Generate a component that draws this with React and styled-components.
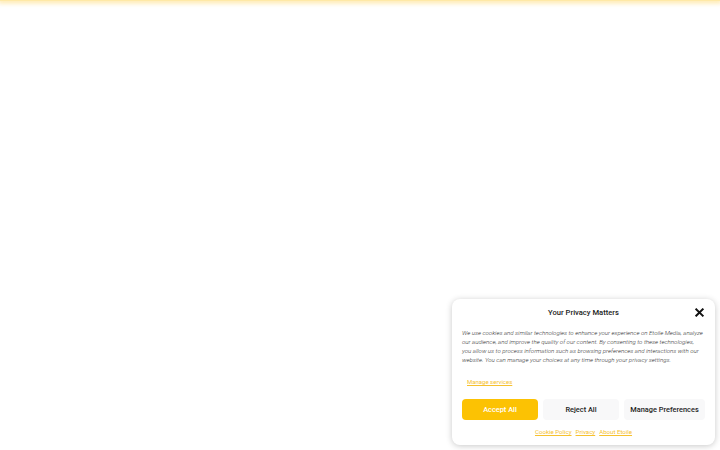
import React from 'react'
import styled, { createGlobalStyle } from 'styled-components'

const GlobalStyle = createGlobalStyle`
  html, body {
    margin: 0;
    padding: 0;
    background: #ffffff;
    font-family: Roboto, "Liberation Sans", sans-serif;
  }
`;

const Page = styled.div`
  width: 720px;
  height: 450px;
  position: relative;
  overflow: hidden;
  background: #fff;
`;

const TopGlow = styled.div`
  height: 1px;
  background: #ffe9a6;
  box-shadow: 0 0 5px 2px rgba(255, 210, 80, 0.55);
`;

const Banner = styled.div`
  position: absolute;
  left: 452px;
  top: 299px;
  width: 263px;
  box-sizing: border-box;
  padding: 8px 10px 10px;
  background: #fff;
  border-radius: 8px;
  box-shadow: 0 1px 6px rgba(0, 0, 0, 0.22);
  display: flex;
  flex-direction: column;
`;

const Header = styled.div`
  position: relative;
  display: flex;
  justify-content: center;
  align-items: center;
  height: 10px;

  h2 {
    margin: 0;
    font-size: 7.6px;
    font-weight: 500;
    color: #222;
  }
`;

const Close = styled.button`
  position: absolute;
  right: 1px;
  top: 0;
  width: 10px;
  height: 10px;
  padding: 0;
  border: 0;
  background: none;
  display: flex;
  align-items: center;
  justify-content: center;
`;

const Message = styled.p`
  margin: 11px 0 0;
  font-size: 6.1px;
  line-height: 9px;
  font-style: italic;
  font-weight: 300;
  color: #333;
  white-space: nowrap;
`;

const Services = styled.a`
  display: block;
  margin: 14px 0 0 5px;
  font-size: 6px;
  color: #f6c12e;
  text-decoration: underline;
`;

const Buttons = styled.div`
  display: grid;
  grid-template-columns: 76px 76px 1fr;
  gap: 5px;
  margin-top: 14px;
`;

const Button = styled.button`
  height: 21px;
  border: 0;
  border-radius: 4px;
  padding: 0;
  font-family: Roboto, "Liberation Sans", sans-serif;
  font-size: 7.4px;
  font-weight: 500;
  background: ${p => (p.$primary ? '#fcc203' : '#f8f8f9')};
  color: ${p => (p.$primary ? '#fff' : '#222')};
`;

const Links = styled.div`
  display: flex;
  justify-content: center;
  gap: 4px;
  margin-top: 8px;

  a {
    font-size: 6.1px;
    color: #f6c12e;
    text-decoration: underline;
  }
`;

const App = () => {
    return (
        <Page>
            <GlobalStyle />
            <TopGlow />
            <Banner>
                <Header>
                    <h2>Your Privacy Matters</h2>
                    <Close aria-label="close">
                        <svg width="9" height="9" viewBox="0 0 10 10">
                            <path d="M1.5 1.5 L8.5 8.5 M8.5 1.5 L1.5 8.5" stroke="#111" strokeWidth="2.2" strokeLinecap="square" />
                        </svg>
                    </Close>
                </Header>
                <Message>
                    We use cookies and similar technologies to enhance your experience on Etoile Media, analyze<br />
                    our audience, and improve the quality of our content. By consenting to these technologies,<br />
                    you allow us to process information such as browsing preferences and interactions with our<br />
                    website. You can manage your choices at any time through your privacy settings.
                </Message>
                <Services href="#">Manage services</Services>
                <Buttons>
                    <Button $primary>Accept All</Button>
                    <Button>Reject All</Button>
                    <Button>Manage Preferences</Button>
                </Buttons>
                <Links>
                    <a href="#">Cookie Policy</a>
                    <a href="#">Privacy</a>
                    <a href="#">About Etoile</a>
                </Links>
            </Banner>
        </Page>
    );
}

export default App
